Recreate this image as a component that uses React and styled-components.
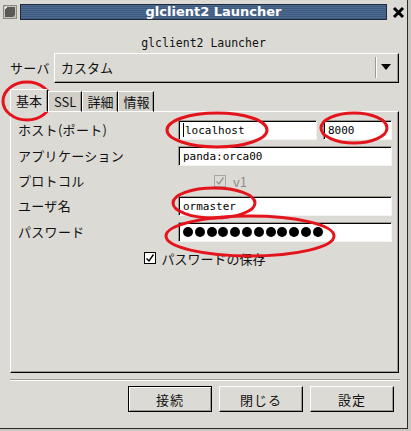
import React from 'react'
import styled, { createGlobalStyle } from 'styled-components'

const GlobalStyle = createGlobalStyle`
  html, body { margin: 0; padding: 0; background: #c9c6bf; }
  body { font-family: "Noto Sans CJK JP", "DejaVu Sans", sans-serif; color: #111; }
`

const Frame = styled.div`
  position: relative;
  width: 408px;
  height: 429px;
  box-sizing: border-box;
  background: #dcdad5;
  border-right: 1px solid #2b2a27;
  border-bottom: 1px solid #2b2a27;
  display: flex;
  flex-direction: column;
`

const TitleBar = styled.div`
  height: 24px;
  display: flex;
  align-items: center;
  gap: 3px;
  padding: 0 1px 0 3px;
`

const WinIcon = styled.div`
  width: 12px;
  height: 12px;
  border: 1px solid #8a8882;
  background: linear-gradient(135deg, #f2f1ee 0 20%, #5a5955 20% 80%, #9a9892 80%);
  box-shadow: inset 0 0 0 1px #c8c6c0;
`

const TitleStripe = styled.div`
  flex: 1;
  height: 16px;
  box-sizing: border-box;
  border: 1px solid #1e2a3a;
  background: repeating-linear-gradient(to bottom, #4d6b91 0 1px, #3e5a7e 1px 2px);
  color: #fff;
  font: bold 13px "DejaVu Sans", sans-serif;
  line-height: 14px;
  text-align: center;
  padding-left: 20px;
`

const CloseBox = styled.div`
  width: 16px;
  height: 16px;
  display: flex;
  align-items: center;
  justify-content: center;
`

const Subtitle = styled.div`
  padding-top: 12px;
  height: 17px;
  line-height: 14px;
  text-align: center;
  font: 11.5px "DejaVu Sans Mono", monospace;
  color: #111;
`

const ServerRow = styled.div`
  display: flex;
  align-items: center;
  margin-left: 10px;
  height: 30px;
`

const Label = styled.div`
  font-size: 13px;
  line-height: 16px;
  letter-spacing: 0.3px;
  width: ${p => p.$width || 'auto'};
`

const Combo = styled.div`
  width: 345px;
  height: 30px;
  box-sizing: border-box;
  border-top: 1px solid #fff;
  border-left: 1px solid #fff;
  border-right: 1px solid #000;
  border-bottom: 1px solid #000;
  box-shadow: inset -1px -1px 0 #9e9a91;
  display: flex;
  align-items: center;
  padding: 0 0 2px 6px;
  font-size: 13px;
`

const ComboText = styled.span`
  flex: 1;
`

const ComboSep = styled.span`
  width: 1px;
  height: 21px;
  background: #9e9a91;
  border-right: 1px solid #fff;
  margin-right: 4px;
`

const Arrow = styled.span`
  width: 0;
  height: 0;
  border-left: 5px solid transparent;
  border-right: 5px solid transparent;
  border-top: 6px solid #000;
  margin-right: 7px;
`

const Notebook = styled.div`
  margin: 8px 8px 0 10px;
  display: flex;
  flex-direction: column;
`

const Tabs = styled.div`
  display: flex;
  align-items: flex-end;
  height: 21px;
  margin-bottom: -1px;
  position: relative;
  z-index: 1;
`

const Tab = styled.div`
  box-sizing: border-box;
  height: ${p => (p.$active ? '23px' : '21px')};
  padding: 0 ${p => p.$pad || 4}px;
  border-top: 1px solid #fff;
  border-left: 1px solid #fff;
  border-right: 1px solid #000;
  box-shadow: inset -1px 0 0 #9e9a91;
  background: ${p => (p.$active ? '#dcdad5' : '#d2cfc9')};
  border-bottom: ${p => (p.$active ? '1px solid #dcdad5' : '1px solid #fff')};
  font-size: 13px;
  line-height: 19px;
  display: flex;
  align-items: center;
`

const Panel = styled.div`
  height: 262px;
  box-sizing: border-box;
  border-top: 1px solid #fff;
  border-left: 1px solid #fff;
  border-right: 1px solid #000;
  border-bottom: 1px solid #000;
  box-shadow: inset -1px -1px 0 #9e9a91;
  padding: 8px 0 0 7px;
`

const Form = styled.div`
  display: grid;
  grid-template-columns: 160px 214px;
  row-gap: 6px;
  align-items: center;
`

const Pair = styled.div`
  display: flex;
  gap: 6px;
`

const Entry = styled.div`
  width: ${p => p.$width || 214}px;
  height: 20px;
  box-sizing: border-box;
  background: #fff;
  border-top: 1px solid #9e9a91;
  border-left: 1px solid #9e9a91;
  border-right: 1px solid #f4f3f1;
  border-bottom: 1px solid #f4f3f1;
  box-shadow: inset 1px 1px 0 #000;
  padding-left: 4px;
  display: flex;
  align-items: center;
  font: 11px "DejaVu Sans Mono", monospace;
  color: #000;
`

const Caret = styled.span`
  width: 1px;
  height: 14px;
  background: #000;
  margin-right: 1px;
`

const Dot = styled.span`
  width: 10px;
  height: 10px;
  border-radius: 50%;
  background: #000;
  margin-right: 1.8px;
`

const CheckLine = styled.div`
  display: flex;
  align-items: center;
  gap: ${p => p.$gap || 7}px;
  height: ${p => p.$height || 18}px;
  margin-left: ${p => p.$indent || 0}px;
  font-size: 13px;
  color: ${p => (p.$disabled ? '#8f8c86' : '#111')};
`

const Box = styled.span`
  width: 12px;
  height: 12px;
  box-sizing: border-box;
  border: 1px solid ${p => (p.$disabled ? '#aaa79f' : '#000')};
  background: ${p => (p.$disabled ? '#dcdad5' : '#fff')};
  display: flex;
  align-items: center;
  justify-content: center;
`

const SaveRow = styled.div`
  grid-column: 1 / 3;
  display: flex;
  justify-content: center;
  margin-top: 2px;
`

const Separator = styled.div`
  margin: 6px 7px 0 10px;
  height: 1px;
  background: #9e9a91;
  border-bottom: 1px solid #fff;
`

const Buttons = styled.div`
  display: flex;
  justify-content: flex-end;
  gap: 7px;
  margin-top: 5px;
  padding-right: 13px;
`

const Button = styled.div`
  width: 84px;
  height: 26px;
  box-sizing: border-box;
  border-top: 1px solid ${p => (p.$default ? '#000' : '#fff')};
  border-left: 1px solid ${p => (p.$default ? '#000' : '#fff')};
  border-right: 1px solid #000;
  border-bottom: 1px solid #000;
  box-shadow: ${p => (p.$default ? 'inset 1px 1px 0 #fff, inset -1px -1px 0 #9e9a91' : 'inset -1px -1px 0 #9e9a91')};
  display: flex;
  align-items: center;
  justify-content: center;
  font-size: 13px;
  letter-spacing: 1px;
`

const Marks = styled.svg`
  position: absolute;
  left: 0;
  top: 0;
  pointer-events: none;
`

const Tick = ({ color }) => (
  <svg width="10" height="10" viewBox="0 0 10 10">
    <path d="M1.5 5.5 L4 8 L8.5 1.5" fill="none" stroke={color} strokeWidth="1.4" />
  </svg>
)

const circles = [
  { cx: 27, cy: 101, rx: 24, ry: 19 },
  { cx: 217, cy: 130, rx: 50, ry: 17 },
  { cx: 354, cy: 128, rx: 33, ry: 15 },
  { cx: 214, cy: 203, rx: 41, ry: 15 },
  { cx: 250, cy: 236, rx: 84, ry: 20 },
]

export default function App () {
  return (
    <Frame>
      <GlobalStyle />
      <TitleBar>
        <WinIcon />
        <TitleStripe>glclient2 Launcher</TitleStripe>
        <CloseBox>
          <svg width="13" height="13" viewBox="0 0 13 13">
            <path d="M2 2 L11 11 M11 2 L2 11" stroke="#000" strokeWidth="3" />
          </svg>
        </CloseBox>
      </TitleBar>

      <Subtitle>glclient2 Launcher</Subtitle>

      <ServerRow>
        <Label $width="44px">サーバ</Label>
        <Combo>
          <ComboText>カスタム</ComboText>
          <ComboSep />
          <Arrow />
        </Combo>
      </ServerRow>

      <Notebook>
        <Tabs>
          <Tab $active $pad={5}>基本</Tab>
          <Tab $pad={5}>SSL</Tab>
          <Tab>詳細</Tab>
          <Tab>情報</Tab>
        </Tabs>
        <Panel>
          <Form>
            <Label>ホスト(ポート)</Label>
            <Pair>
              <Entry $width={139}><Caret />localhost</Entry>
              <Entry $width={69}>8000</Entry>
            </Pair>

            <Label>アプリケーション</Label>
            <Entry>panda:orca00</Entry>

            <Label>プロトコル</Label>
            <CheckLine $indent={36} $disabled>
              <Box $disabled><Tick color="#9a978f" /></Box>
              v1
            </CheckLine>

            <Label>ユーザ名</Label>
            <Entry>ormaster</Entry>

            <Label>パスワード</Label>
            <Entry>
              {Array.from({ length: 12 }, (_, i) => <Dot key={i} />)}
            </Entry>

            <SaveRow>
              <CheckLine $height={16} $gap={5}>
                <Box><Tick color="#000" /></Box>
                パスワードの保存
              </CheckLine>
            </SaveRow>
          </Form>
        </Panel>
      </Notebook>

      <Separator />

      <Buttons>
        <Button $default>接続</Button>
        <Button>閉じる</Button>
        <Button>設定</Button>
      </Buttons>

      <Marks width="408" height="429">
        {circles.map((c, i) => (
          <ellipse key={i} {...c} fill="none" stroke="#e4141c" strokeWidth="3" />
        ))}
      </Marks>
    </Frame>
  )
}
